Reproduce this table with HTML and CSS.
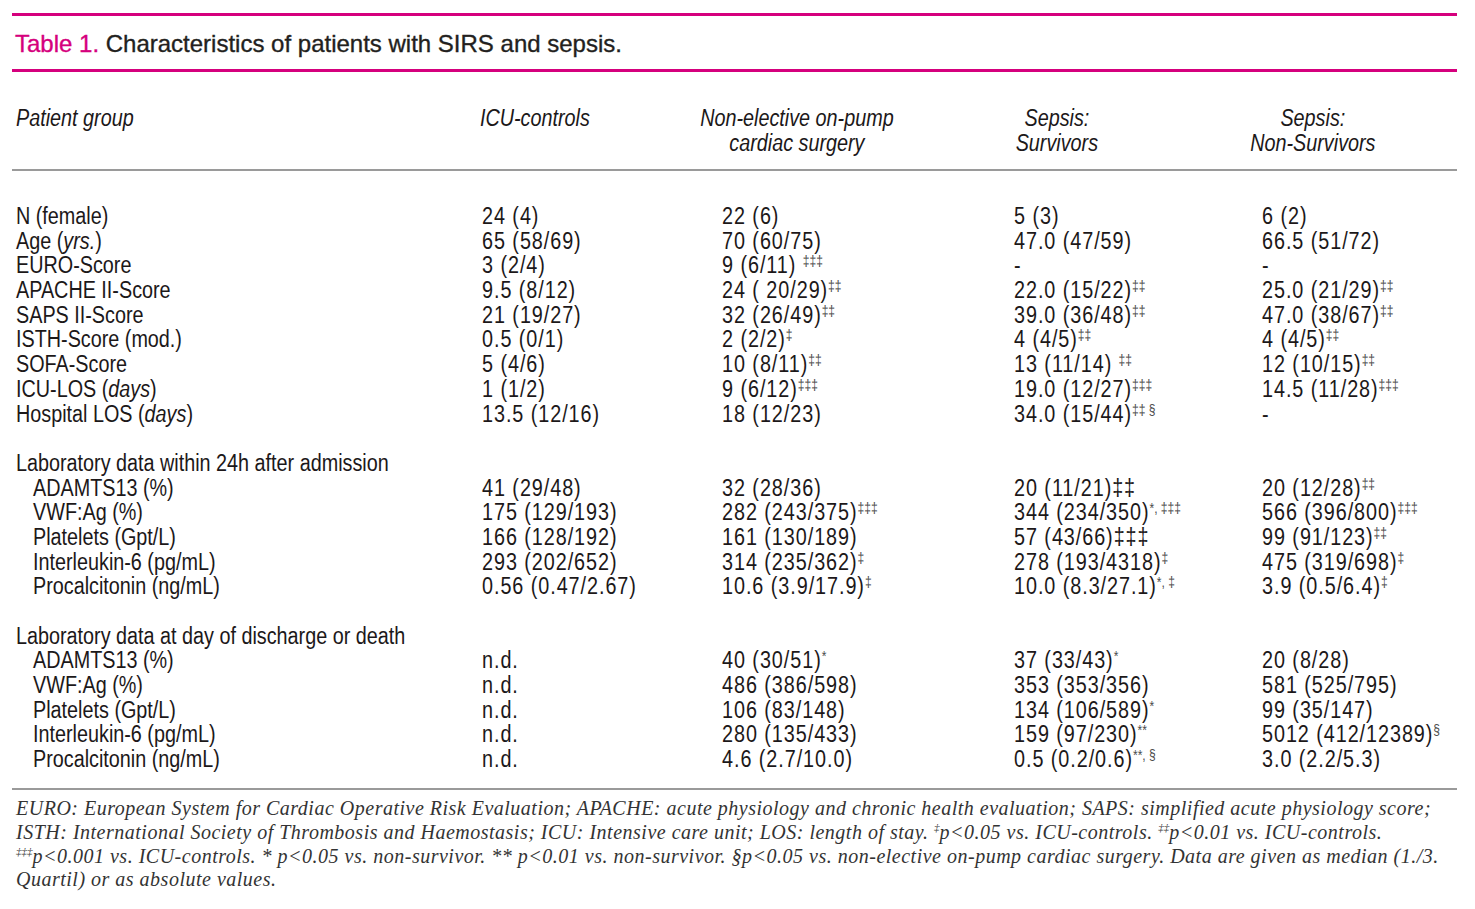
FILE: index.html
```html
<!DOCTYPE html>
<html lang="en">
<head>
<meta charset="utf-8">
<title>Table 1. Characteristics of patients with SIRS and sepsis.</title>
<link rel="stylesheet" href="styles.css">
</head>
<body>
<div class="figure">
  <div class="rule-pink"></div>
  <h1 class="title"><span class="label">Table 1.</span> Characteristics of patients with SIRS and sepsis.</h1>
  <div class="rule-pink"></div>

  <div class="thead">
    <div class="h">Patient group</div>
    <div class="h">ICU-controls</div>
    <div class="h c">Non-elective on-pump<br>cardiac surgery</div>
    <div class="h c">Sepsis:<br>Survivors</div>
    <div class="h c">Sepsis:<br>Non-Survivors</div>
  </div>

  <div class="rule-gray"></div>

  <div class="tbody">
    <div class="row"><div>N (female)</div><div>24 (4)</div><div>22 (6)</div><div>5 (3)</div><div>6 (2)</div></div>
    <div class="row"><div>Age (<i>yrs.</i>)</div><div>65 (58/69)</div><div>70 (60/75)</div><div>47.0 (47/59)</div><div>66.5 (51/72)</div></div>
    <div class="row"><div>EURO-Score</div><div>3 (2/4)</div><div>9 (6/11) <sup class="s">‡‡‡</sup></div><div>-</div><div>-</div></div>
    <div class="row"><div>APACHE II-Score</div><div>9.5 (8/12)</div><div>24 ( 20/29)<sup class="s">‡‡</sup></div><div>22.0 (15/22)<sup class="s">‡‡</sup></div><div>25.0 (21/29)<sup class="s">‡‡</sup></div></div>
    <div class="row"><div>SAPS II-Score</div><div>21 (19/27)</div><div>32 (26/49)<sup class="s">‡‡</sup></div><div>39.0 (36/48)<sup class="s">‡‡</sup></div><div>47.0 (38/67)<sup class="s">‡‡</sup></div></div>
    <div class="row"><div>ISTH-Score (mod.)</div><div>0.5 (0/1)</div><div>2 (2/2)<sup class="s">‡</sup></div><div>4 (4/5)<sup class="s">‡‡</sup></div><div>4 (4/5)<sup class="s">‡‡</sup></div></div>
    <div class="row"><div>SOFA-Score</div><div>5 (4/6)</div><div>10 (8/11)<sup class="s">‡‡</sup></div><div>13 (11/14) <sup class="s">‡‡</sup></div><div>12 (10/15)<sup class="s">‡‡</sup></div></div>
    <div class="row"><div>ICU-LOS (<i>days</i>)</div><div>1 (1/2)</div><div>9 (6/12)<sup class="s">‡‡‡</sup></div><div>19.0 (12/27)<sup class="s">‡‡‡</sup></div><div>14.5 (11/28)<sup class="s">‡‡‡</sup></div></div>
    <div class="row"><div>Hospital LOS (<i>days</i>)</div><div>13.5 (12/16)</div><div>18 (12/23)</div><div>34.0 (15/44)<sup class="s">‡‡ §</sup></div><div>-</div></div>
    <div class="row blank"></div>
    <div class="row"><div class="span">Laboratory data within 24h after admission</div></div>
    <div class="row sub"><div>ADAMTS13 (%)</div><div>41 (29/48)</div><div>32 (28/36)</div><div>20 (11/21)‡‡</div><div>20 (12/28)<sup class="s">‡‡</sup></div></div>
    <div class="row sub"><div>VWF:Ag (%)</div><div>175 (129/193)</div><div>282 (243/375)<sup class="s">‡‡‡</sup></div><div>344 (234/350)<sup class="s">*, ‡‡‡</sup></div><div>566 (396/800)<sup class="s">‡‡‡</sup></div></div>
    <div class="row sub"><div>Platelets (Gpt/L)</div><div>166 (128/192)</div><div>161 (130/189)</div><div>57 (43/66)‡‡‡</div><div>99 (91/123)<sup class="s">‡‡</sup></div></div>
    <div class="row sub"><div>Interleukin-6 (pg/mL)</div><div>293 (202/652)</div><div>314 (235/362)<sup class="s">‡</sup></div><div>278 (193/4318)<sup class="s">‡</sup></div><div>475 (319/698)<sup class="s">‡</sup></div></div>
    <div class="row sub"><div>Procalcitonin (ng/mL)</div><div>0.56 (0.47/2.67)</div><div>10.6 (3.9/17.9)<sup class="s">‡</sup></div><div>10.0 (8.3/27.1)<sup class="s">*, ‡</sup></div><div>3.9 (0.5/6.4)<sup class="s">‡</sup></div></div>
    <div class="row blank"></div>
    <div class="row"><div class="span">Laboratory data at day of discharge or death</div></div>
    <div class="row sub"><div>ADAMTS13 (%)</div><div>n.d.</div><div>40 (30/51)<sup class="s">*</sup></div><div>37 (33/43)<sup class="s">*</sup></div><div>20 (8/28)</div></div>
    <div class="row sub"><div>VWF:Ag (%)</div><div>n.d.</div><div>486 (386/598)</div><div>353 (353/356)</div><div>581 (525/795)</div></div>
    <div class="row sub"><div>Platelets (Gpt/L)</div><div>n.d.</div><div>106 (83/148)</div><div>134 (106/589)<sup class="s">*</sup></div><div>99 (35/147)</div></div>
    <div class="row sub"><div>Interleukin-6 (pg/mL)</div><div>n.d.</div><div>280 (135/433)</div><div>159 (97/230)<sup class="s">**</sup></div><div>5012 (412/12389)<sup class="s">§</sup></div></div>
    <div class="row sub"><div>Procalcitonin (ng/mL)</div><div>n.d.</div><div>4.6 (2.7/10.0)</div><div>0.5 (0.2/0.6)<sup class="s">**, §</sup></div><div>3.0 (2.2/5.3)</div></div>
  </div>

  <div class="rule-gray"></div>

  <p class="notes">EURO: European System for Cardiac Operative Risk Evaluation; APACHE: acute physiology and chronic health evaluation; SAPS: simplified acute physiology score;<br>ISTH: International Society of Thrombosis and Haemostasis; ICU: Intensive care unit; LOS: length of stay. <sup class="n">‡</sup>p&lt;0.05 vs. ICU-controls. <sup class="n">‡‡</sup>p&lt;0.01 vs. ICU-controls.<br><sup class="n">‡‡‡</sup>p&lt;0.001 vs. ICU-controls. * p&lt;0.05 vs. non-survivor. ** p&lt;0.01 vs. non-survivor. §p&lt;0.05 vs. non-elective on-pump cardiac surgery. Data are given as median (1./3.<br>Quartil) or as absolute values.</p>
</div>
</body>
</html>
```
FILE: styles.css
```css
html, body {
  margin: 0;
  padding: 0;
  background: #ffffff;
  overflow: hidden;
}

body {
  color: #1c1819;
  font-family: "Liberation Sans", Arial, sans-serif;
}

.figure {
  margin-left: 12px;
  width: 1445px;
  padding-top: 13px;
}

.rule-pink {
  height: 3px;
  background: #d5007d;
}

.rule-gray {
  height: 2px;
  background: #9a9a9a;
}

.title {
  margin: 0;
  height: 53px;
  box-sizing: border-box;
  padding: 2px 0 0 3px;
  font-family: "Liberation Sans", Arial, sans-serif;
  font-size: 24px;
  line-height: 51px;
  font-weight: normal;
  color: #231f20;
  -webkit-text-stroke: 0.35px #231f20;
  white-space: nowrap;
}

.title .label {
  color: #d5007d;
  -webkit-text-stroke: 0.35px #d5007d;
}

/* The table face is a condensed grotesque; Liberation Sans is narrowed to match. */
.thead,
.tbody {
  width: 1680px;
  transform: scaleX(0.86);
  transform-origin: 0 0;
  font-size: 23px;
  line-height: 24.7px;
  white-space: nowrap;
}

.thead {
  display: grid;
  grid-template-columns: 539.5px 248.8px 239.5px 365.1px 230.2px;
  padding: 34px 0 14px 4.65px;
  font-style: italic;
}

.thead .c {
  text-align: center;
}

.tbody {
  padding: 32.6px 0 16px 4.65px;
}

.row {
  display: grid;
  grid-template-columns: 541.9px 279.1px 339.5px 288.4px 1fr;
  height: 24.7px;
}

.row > div + div {
  letter-spacing: 1.1px;
}

.row.sub > div:first-child {
  padding-left: 19.8px;
}

.row .span {
  grid-column: 1 / -1;
}

.s {
  font-size: 14px;
  line-height: 0;
  vertical-align: 7px;
  color: #4a4a4a;
  letter-spacing: 0;
}

.notes {
  margin: 0;
  padding: 7.5px 0 0 4px;
  font-family: "Liberation Serif", "Times New Roman", serif;
  font-style: italic;
  font-size: 20px;
  line-height: 23.7px;
  letter-spacing: 0.5px;
  color: #333;
  white-space: nowrap;
}

.notes .n {
  font-size: 11px;
  line-height: 0;
  vertical-align: 8px;
  letter-spacing: 0;
}
```
